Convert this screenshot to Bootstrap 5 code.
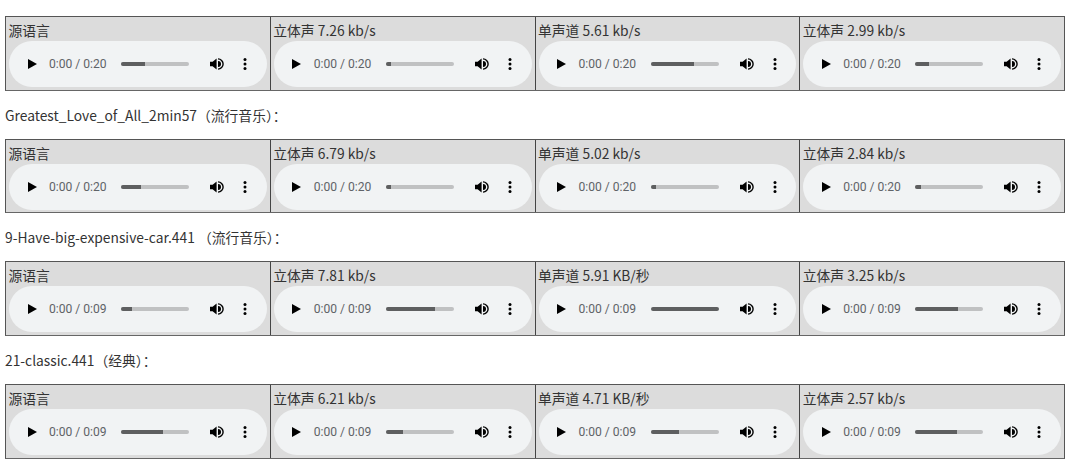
<!DOCTYPE html>
<html lang="zh">
<head>
  <meta charset="UTF-8" />
  <meta name="viewport" content="width=device-width, initial-scale=1" />
  <title>Audio samples</title>
  <link href="https://cdn.jsdelivr.net/npm/bootstrap@5.3.0/dist/css/bootstrap.min.css" rel="stylesheet" />
  <style>
    body {
      font-family: "Noto Sans CJK SC", sans-serif;
      font-size: 13.8px;
      color: #333;
      background: #fff;
    }
    .page-wrap { padding: 16px 13px 0 5px; }
    .sample-title { height: 48px; line-height: 48px; white-space: nowrap; }
    .sample-row {
      border: 1px solid #555;
      border-bottom-color: #666;
      height: 74.67px;
      background: #dcdcdc;
    }
    .sample-cell {
      flex: 1 1 0;
      min-width: 0;
      padding: 4px 3px 0 3px;
      border-left: 1px solid #444;
    }
    .sample-cell:first-child { border-left: 0; }
    .sample-label { height: 20px; line-height: 18px; margin-left: -0.5px; white-space: nowrap; }
    .player {
      height: 46px;
      background: #f1f3f4;
      border-radius: 23px;
      padding-left: 18.5px;
      padding-right: 18px;
      font-family: Roboto, "Liberation Sans", sans-serif;
      font-size: 12.1px;
      color: #5f6368;
    }
    .player-time { width: 59px; margin-left: 12.5px; white-space: nowrap; }
    .player-track {
      width: 68px;
      height: 4px;
      margin-left: 13px;
      border-radius: 2px;
      background: #c0c1c2;
      overflow: hidden;
    }
    .player-fill { height: 100%; background: #5e5f60; }
    .player-volume { margin-left: 21px; }
    .player-more { margin-left: 19px; }
  </style>
</head>
<body>
  <div class="page-wrap" id="samples"></div>

  <script>
    const samples = [
      { title: "", time: "0:20", cells: [["源语言", 35], ["立体声 7.26 kb/s", 7], ["单声道 5.61 kb/s", 64], ["立体声 2.99 kb/s", 20]] },
      { title: "Greatest_Love_of_All_2min57（流行音乐）：", time: "0:20", cells: [["源语言", 30], ["立体声 6.79 kb/s", 7], ["单声道 5.02 kb/s", 8], ["立体声 2.84 kb/s", 8]] },
      { title: "9-Have-big-expensive-car.441 （流行音乐）：", time: "0:09", cells: [["源语言", 16], ["立体声 7.81 kb/s", 72], ["单声道 5.91 KB/秒", 100], ["立体声 3.25 kb/s", 63]] },
      { title: "21-classic.441（经典）：", time: "0:09", cells: [["源语言", 62], ["立体声 6.21 kb/s", 26], ["单声道 4.71 KB/秒", 42], ["立体声 2.57 kb/s", 62]] }
    ];

    const playIcon = '<svg width="9" height="10" viewBox="0 0 9 10"><path d="M0 0 9 5 0 10Z" fill="#000"/></svg>';
    const volumeIcon = '<svg class="player-volume" width="14" height="12" viewBox="0 0 14 12"><path d="M0 3.8H2.6L6.6 0.4V11.6L2.6 8.2H0Z" fill="#000"/><path d="M8 3A3 3 0 0 1 8 9Z" fill="#000"/><path d="M8 0.2V1.6A4.4 4.4 0 0 1 8 10.4V11.8A5.8 5.8 0 0 0 8 0.2Z" fill="#000"/></svg>';
    const moreIcon = '<svg class="player-more" width="4" height="12" viewBox="0 0 4 12"><circle cx="2" cy="1.6" r="1.5" fill="#000"/><circle cx="2" cy="6" r="1.5" fill="#000"/><circle cx="2" cy="10.4" r="1.5" fill="#000"/></svg>';

    document.getElementById("samples").innerHTML = samples.map(s => `
      ${s.title ? `<div class="sample-title">${s.title}</div>` : ""}
      <div class="sample-row d-flex">
        ${s.cells.map(c => `
          <div class="sample-cell">
            <div class="sample-label">${c[0]}</div>
            <div class="player d-flex align-items-center">
              ${playIcon}
              <span class="player-time">0:00 / ${s.time}</span>
              <div class="player-track"><div class="player-fill" style="width: ${c[1]}%"></div></div>
              ${volumeIcon}
              ${moreIcon}
            </div>
          </div>`).join("")}
      </div>`).join("");
  </script>
  <script src="https://cdn.jsdelivr.net/npm/bootstrap@5.3.0/dist/js/bootstrap.bundle.min.js"></script>
</body>
</html>
